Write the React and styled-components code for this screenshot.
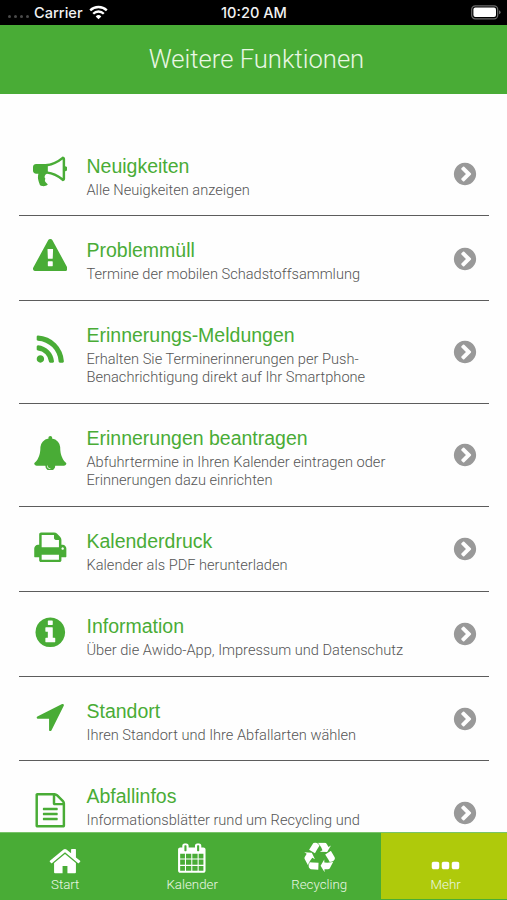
import styled, { createGlobalStyle } from "styled-components";
import { useState } from 'react';

const icones = {
  bullhorn: "M1664 640q53 0 90.5 37.5t37.5 90.5-37.5 90.5-90.5 37.5v384q0 52-38 90t-90 38q-417-347-812-380-58 19-91 66t-31 100.5 40 92.5q-20 33-23 65.5t6 58 33.5 55 48 50 61.5 50.5q-29 58-111.5 83t-168.5 11.5-132-55.5q-7-23-29.5-87.5t-32-94.5-23-89-15-101 3.5-98.5 22-110.5h-122q-66 0-113-47t-47-113v-192q0-66 47-113t113-47h480q435 0 896-384 52 0 90 38t38 90v384zm-128 604v-954q-394 302-768 343v270q377 42 768 341z",
  warning: "M1024 1375v-190q0-14-9.5-23.5t-22.5-9.5h-192q-13 0-22.5 9.5t-9.5 23.5v190q0 14 9.5 23.5t22.5 9.5h192q13 0 22.5-9.5t9.5-23.5zm-2-374l18-459q0-12-10-19-13-11-24-11h-220q-11 0-24 11-10 7-10 21l17 457q0 10 10 16.5t24 6.5h185q14 0 23.5-6.5t10.5-16.5zm-14-934l768 1408q35 63-2 126-17 29-46.5 46t-63.5 17h-1536q-34 0-63.5-17t-46.5-46q-37-63-2-126l768-1408q17-31 47-49t65-18 65 18 47 49z",
  rss: "M576 1344q0 80-56 136t-136 56-136-56-56-136 56-136 136-56 136 56 56 136zm512 123q2 28-17 48-18 21-47 21h-135q-25 0-43-16.5t-20-41.5q-22-229-184.5-391.5t-391.5-184.5q-25-2-41.5-20t-16.5-43v-135q0-29 21-47 17-17 43-17h5q160 13 306 80.5t259 181.5q114 113 181.5 259t80.5 306zm512 2q2 27-18 47-18 20-46 20h-143q-26 0-44.5-17.5t-19.5-42.5q-12-215-101-408.5t-231.5-336-336-231.5-408.5-102q-25-1-42.5-19.5t-17.5-43.5v-143q0-28 20-46 18-18 44-18h3q262 13 501.5 120t425.5 294q187 186 294 425.5t120 501.5z",
  bell: "M912 1696q0-16-16-16-59 0-101.5-42.5t-42.5-101.5q0-16-16-16t-16 16q0 73 51.5 124.5t124.5 51.5q16 0 16-16zm816-288q0 52-38 90t-90 38h-448q0 106-75 181t-181 75-181-75-75-181h-448q-52 0-90-38t-38-90q50-42 91-88t85-119.5 74.5-158.5 50-206 19.5-260q0-152 117-282.5t307-158.5q-8-19-8-39 0-40 28-68t68-28 68 28 28 68q0 20-8 39 190 28 307 158.5t117 282.5q0 139 19.5 260t50 206 74.5 158.5 85 119.5 91 88z",
  print: "M448 1536h896v-256h-896v256zm0-640h896v-384h-160q-40 0-68-28t-28-68v-160h-640v640zm1152 64q0-26-19-45t-45-19-45 19-19 45 19 45 45 19 45-19 19-45zm128 0v416q0 13-9.5 22.5t-22.5 9.5h-224v160q0 40-28 68t-68 28h-960q-40 0-68-28t-28-68v-160h-224q-13 0-22.5-9.5t-9.5-22.5v-416q0-79 56.5-135.5t135.5-56.5h64v-544q0-40 28-68t68-28h672q40 0 88 20t76 48l152 152q28 28 48 76t20 88v256h64q79 0 135.5 56.5t56.5 135.5z",
  info: "M1152 1376v-160q0-14-9-23t-23-9h-96v-512q0-14-9-23t-23-9h-320q-14 0-23 9t-9 23v160q0 14 9 23t23 9h96v320h-96q-14 0-23 9t-9 23v160q0 14 9 23t23 9h448q14 0 23-9t9-23zm-128-896v-160q0-14-9-23t-23-9h-192q-14 0-23 9t-9 23v160q0 14 9 23t23 9h192q14 0 23-9t9-23zm640 416q0 209-103 385.5t-279.5 279.5-385.5 103-385.5-103-279.5-279.5-103-385.5 103-385.5 279.5-279.5 385.5-103 385.5 103 279.5 279.5 103 385.5z",
  location: "M1593 349l-640 1280q-17 35-57 35-5 0-15-2-22-5-35.5-22.5t-13.5-39.5v-576h-576q-22 0-39.5-13.5t-22.5-35.5 4-42 29-30l1280-640q13-7 29-7 27 0 45 19 15 14 18.5 34.5t-6.5 39.5z",
  file: "M1596 380q28 28 48 76t20 88v1152q0 40-28 68t-68 28h-1344q-40 0-68-28t-28-68v-1600q0-40 28-68t68-28h896q40 0 88 20t76 48zm-444-244v376h376q-10-29-22-41l-313-313q-12-12-41-22zm384 1528v-1024h-416q-40 0-68-28t-28-68v-416h-768v1536h1280zm-1024-864q0-14 9-23t23-9h704q14 0 23 9t9 23v64q0 14-9 23t-23 9h-704q-14 0-23-9t-9-23v-64zm736 224q14 0 23 9t9 23v64q0 14-9 23t-23 9h-704q-14 0-23-9t-9-23v-64q0-14 9-23t23-9h704zm0 256q14 0 23 9t9 23v64q0 14-9 23t-23 9h-704q-14 0-23-9t-9-23v-64q0-14 9-23t23-9h704z",
  home: "M1472 992v480q0 26-19 45t-45 19h-384v-384h-256v384h-384q-26 0-45-19t-19-45v-480q0-1 .5-3t.5-3l575-474 575 474q1 2 1 6zm223-69l-62 74q-8 9-21 11h-3q-13 0-21-7l-692-577-692 577q-12 8-24 7-13-2-21-11l-62-74q-8-10-7-23.5t11-21.5l719-599q32-26 76-26t76 26l244 204v-195q0-14 9-23t23-9h192q14 0 23 9t9 23v408l219 182q10 8 11 21.5t-7 23.5z",
  calendar: "M192 1664h288v-288h-288v288zm352 0h320v-288h-320v288zm-352-352h288v-320h-288v320zm352 0h320v-320h-320v320zm-352-384h288v-288h-288v288zm736 736h320v-288h-320v288zm-384-736h320v-288h-320v288zm768 736h288v-288h-288v288zm-384-352h320v-320h-320v320zm-352-864v-288q0-13-9.5-22.5t-22.5-9.5h-64q-13 0-22.5 9.5t-9.5 22.5v288q0 13 9.5 22.5t22.5 9.5h64q13 0 22.5-9.5t9.5-22.5zm736 864h288v-320h-288v320zm-384-384h320v-288h-320v288zm384 0h288v-288h-288v288zm32-480v-288q0-13-9.5-22.5t-22.5-9.5h-64q-13 0-22.5 9.5t-9.5 22.5v288q0 13 9.5 22.5t22.5 9.5h64q13 0 22.5-9.5t9.5-22.5zm384-64v1280q0 52-38 90t-90 38h-1408q-52 0-90-38t-38-90v-1280q0-52 38-90t90-38h128v-96q0-66 47-113t113-47h64q66 0 113 47t47 113v96h384v-96q0-66 47-113t113-47h64q66 0 113 47t47 113v96h128q52 0 90 38t38 90z",
  recycle: "M836 1169l-15 368-2 22-420-29q-36-3-67-31.5t-47-65.5q-11-27-14.5-55t4-65 12-55 21.5-64 19-53q78 12 509 28zm-387-586l180 379-147-92q-63 72-111.5 144.5t-72.5 125-39.5 94.5-18.5 63l-4 21-190-357q-17-26-18-56t6-47l8-18q35-63 114-188l-140-86zm1231 517l-188 359q-12 29-36.5 46.5t-43.5 20.5l-18 4q-71 7-219 12l8 164-230-367 211-362 7 173q170 16 283 5t170-33zm-785-924q-47 63-265 435l-317-187-19-12 225-356q20-31 60-45t80-10q24 2 48.5 12t42 21 41.5 33 36 34.5 36 39.5 32 35zm655 307l212 363q18 37 12.5 76t-27.5 74q-13 20-33 37t-38 28-48.5 22-47 16-51.5 14-46 12q-34-72-265-436l313-195zm-143-226l142-83-220 373-419-20 151-86q-34-89-75-166t-75.5-123.5-64.5-80-47-46.5l-17-13 405 1q31-3 58 10.5t39 28.5l11 15q39 61 112 190z",
  ellipsis: "M576 736v192q0 40-28 68t-68 28h-192q-40 0-68-28t-28-68v-192q0-40 28-68t68-28h192q40 0 68 28t28 68zm512 0v192q0 40-28 68t-68 28h-192q-40 0-68-28t-28-68v-192q0-40 28-68t68-28h192q40 0 68 28t28 68zm512 0v192q0 40-28 68t-68 28h-192q-40 0-68-28t-28-68v-192q0-40 28-68t68-28h192q40 0 68 28t28 68z",
  chevron: "M845 1395l454-454q19-19 19-45t-19-45l-454-454q-19-19-45-19t-45 19l-102 102q-19 19-19 45t19 45l307 307-307 307q-19 19-19 45t19 45l102 102q19 19 45 19t45-19zm819-499q0 209-103 385.5t-279.5 279.5-385.5 103-385.5-103-279.5-279.5-103-385.5 103-385.5 279.5-279.5 385.5-103 385.5 103 279.5 279.5 103 385.5z",
}

const funcoes = [
{icone: "bullhorn", titulo: "Neuigkeiten", linhas: ["Alle Neuigkeiten anzeigen"]},
{icone: "warning", titulo: "Problemmüll", linhas: ["Termine der mobilen Schadstoffsammlung"]},
{icone: "rss", titulo: "Erinnerungs-Meldungen", linhas: ["Erhalten Sie Terminerinnerungen per Push-", "Benachrichtigung direkt auf Ihr Smartphone"]},
{icone: "bell", titulo: "Erinnerungen beantragen", linhas: ["Abfuhrtermine in Ihren Kalender eintragen oder", "Erinnerungen dazu einrichten"]},
{icone: "print", titulo: "Kalenderdruck", linhas: ["Kalender als PDF herunterladen"]},
{icone: "info", titulo: "Information", linhas: ["Über die Awido-App, Impressum und Datenschutz"]},
{icone: "location", titulo: "Standort", linhas: ["Ihren Standort und Ihre Abfallarten wählen"]},
{icone: "file", titulo: "Abfallinfos", linhas: ["Informationsblätter rund um Recycling und", "Entsorgung von Abfällen"]},
]

const abas = [
{nome: "Start", icone: "home", tamanho: 34, desvio: 1.2},
{nome: "Kalender", icone: "calendar", tamanho: 29.6, desvio: -1.8},
{nome: "Recycling", icone: "recycle", tamanho: 31.2, desvio: -1.5},
{nome: "Mehr", icone: "ellipsis", tamanho: 35, desvio: 7.2},
]

export default function App() {
const [abaAtiva, setAbaAtiva] = useState("Mehr")

    return (
          <Tela>
            <GlobalStyle />
            <BarraStatus>
              <Operadora>
                <Sinal><i /><i /><i /><i /></Sinal>
                Carrier
                <Wifi />
              </Operadora>
              <Hora>10:20 AM</Hora>
              <Bateria />
            </BarraStatus>
            <Topo>Weitere Funktionen</Topo>
            <Lista>
              {funcoes.map((funcao) => (
              <Funcao key={funcao.titulo} $linhas={funcao.linhas.length}>
                <Simbolo><Icone nome={funcao.icone} tamanho={34.6} /></Simbolo>
                <Textos>
                  <Titulo>{funcao.titulo}</Titulo>
                  {funcao.linhas.map((linha) => <Descricao key={linha}>{linha}</Descricao>)}
                </Textos>
                <Seta><Icone nome="chevron" tamanho={26} /></Seta>
              </Funcao>
              ))}
            </Lista>
            <Menu>
              {abas.map((aba) => (
              <Aba key={aba.nome} $ativa={aba.nome === abaAtiva} onClick={() => setAbaAtiva(aba.nome)}>
                <SimboloAba $desvio={aba.desvio}><Icone nome={aba.icone} tamanho={aba.tamanho} /></SimboloAba>
                <span>{aba.nome}</span>
              </Aba>
              ))}
            </Menu>
          </Tela>
    );
  }

function Icone({ nome, tamanho }) {
    return (
      <Desenho width={tamanho} height={tamanho} viewBox="0 0 1792 1792">
        <path d={icones[nome]} />
      </Desenho>
    );
  }

function Wifi() {
    return (
      <svg width="19" height="15" viewBox="0 0 19 15" fill="none" stroke="#fff" strokeWidth="2.3">
        <path d="M1.2 5.4a11.8 11.8 0 0 1 16.6 0" />
        <path d="M4.2 8.7a7.5 7.5 0 0 1 10.6 0" />
        <path d="M9.5 14.2L6.7 11.4a4 4 0 0 1 5.6 0z" fill="#fff" stroke="none" />
      </svg>
    );
  }

function Bateria() {
    return (
      <svg width="30" height="15" viewBox="0 0 30 15">
        <rect x="0.7" y="0.8" width="26" height="13" rx="3.6" fill="none" stroke="#6b6b6b" strokeWidth="1.2" />
        <rect x="2.4" y="2.5" width="22.6" height="9.6" rx="2" fill="#fff" />
        <path d="M28 5.3q1.6 .6 1.6 2t-1.6 2z" fill="#6b6b6b" />
      </svg>
    );
  }

  const GlobalStyle = createGlobalStyle`
  body {
    margin: 0;
    background: #fff;
  }
  * {
    box-sizing: border-box;
  }
  `

  const Tela = styled.div`
  width: 507px;
  height: 900px;
  display: flex;
  flex-direction: column;
  overflow: hidden;
  background: #fefefe;
  font-family: Roboto, sans-serif;
  `

  const BarraStatus = styled.div`
  flex: none;
  height: 25px;
  background: #000;
  color: #f2f2f2;
  display: grid;
  grid-template-columns: 1fr auto 1fr;
  align-items: center;
  padding: 0 6px 0 8px;
  font-family: Inter, sans-serif;
  font-size: 14.6px;
  font-weight: 500;
  > svg {
    justify-self: end;
  }
  `

  const Operadora = styled.div`
  display: flex;
  align-items: center;
  svg {
    margin-left: 6px;
  }
  `

  const Sinal = styled.div`
  display: flex;
  gap: 3px;
  margin: 8px 5px 0 0;
  i {
    width: 3px;
    height: 3px;
    border-radius: 50%;
    background: #4a4a4a;
  }
  `

  const Hora = styled.div`
  margin-right: 1px;
  `

  const Topo = styled.h1`
  flex: none;
  height: 69px;
  margin: 0;
  padding: 0 0 1px 6px;
  background: #49ac36;
  color: #e9f7e4;
  display: flex;
  align-items: center;
  justify-content: center;
  font-size: 25.6px;
  font-weight: 300;
  `

  const Lista = styled.div`
  flex: 1;
  min-height: 0;
  overflow: hidden;
  padding: 37.4px 18.5px 0 19px;
  `

  const Funcao = styled.div`
  height: ${(props) => (props.$linhas === 2 ? 103 : 84.8)}px;
  border-bottom: 1px solid #5c5c5c;
  display: flex;
  align-items: center;
  color: #49ac36;
  padding: 0 10.3px 0 13.8px;
  `

  const Desenho = styled.svg`
  flex: none;
  display: block;
  fill: currentColor;
  `

  const Simbolo = styled.div`
  margin-top: -3.6px;
  `

  const Textos = styled.div`
  flex: 1;
  align-self: flex-start;
  padding: 23.2px 0 0 19.1px;
  white-space: nowrap;
  `

  const Titulo = styled.div`
  font-family: "Liberation Sans", sans-serif;
  font-size: 19.5px;
  line-height: 23px;
  margin-bottom: 3px;
  `

  const Descricao = styled.div`
  color: #555;
  font-size: 14.62px;
  font-weight: 300;
  line-height: 18.3px;
  `

  const Seta = styled.div`
  color: #999;
  margin-top: 1px;
  `

  const Menu = styled.div`
  flex: none;
  height: 68px;
  background: #49ac36;
  border-top: 1px solid #79c36a;
  display: grid;
  grid-template-columns: repeat(3, 127px) 1fr;
  `

  const Aba = styled.button`
  border: none;
  margin-bottom: 1px;
  background: ${(props) => (props.$ativa ? "#afca0b" : "transparent")};
  color: #fff;
  display: flex;
  flex-direction: column;
  align-items: center;
  padding: 10px 0 0 3.4px;
  font-family: Roboto, sans-serif;
  font-size: 13.3px;
  font-weight: 300;
  span {
    color: #e9f7e4;
  }
  `

  const SimboloAba = styled.div`
  height: 33.5px;
  display: flex;
  align-items: center;
  transform: translateY(${(props) => props.$desvio}px);
  `
